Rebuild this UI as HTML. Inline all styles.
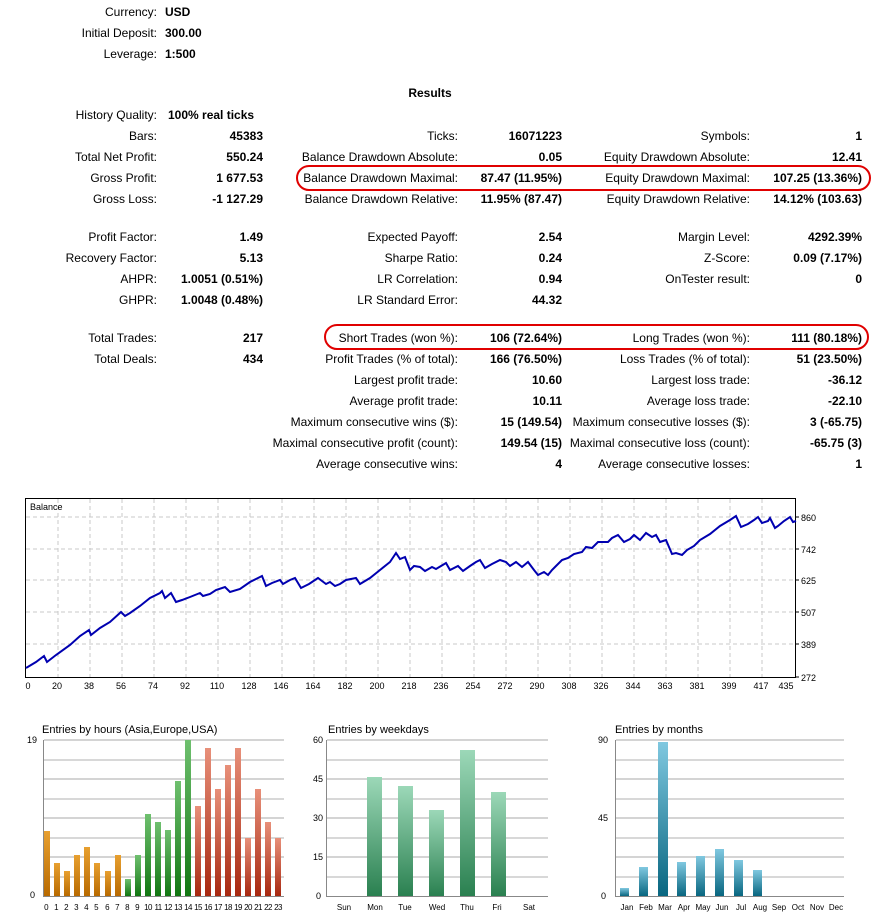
<!DOCTYPE html>
<html><head><meta charset="utf-8"><style>
html,body{margin:0;padding:0;background:#fff;width:889px;height:919px;overflow:hidden}
svg{display:block;font-family:"Liberation Sans",Tahoma,sans-serif}
.l{font-size:12px;fill:#000;text-anchor:end}
.v{font-size:12px;fill:#000;text-anchor:end;font-weight:bold}
.s{font-size:9px;fill:#000}
</style></head><body>
<svg width="889" height="919" viewBox="0 0 889 919">
<g>
<text class="l" x="157" y="16">Currency:</text><text class="v" x="165" y="16" style="text-anchor:start">USD</text>
<text class="l" x="157" y="37">Initial Deposit:</text><text class="v" x="165" y="37" style="text-anchor:start">300.00</text>
<text class="l" x="157" y="58">Leverage:</text><text class="v" x="165" y="58" style="text-anchor:start">1:500</text>
<text class="v" x="430" y="97" style="text-anchor:middle">Results</text>
<text class="l" x="157" y="119">History Quality:</text><text class="v" x="168" y="119" style="text-anchor:start">100% real ticks</text>

<text class="l" x="157" y="140">Bars:</text><text class="v" x="263" y="140">45383</text>
<text class="l" x="458" y="140">Ticks:</text><text class="v" x="562" y="140">16071223</text>
<text class="l" x="750" y="140">Symbols:</text><text class="v" x="862" y="140">1</text>

<text class="l" x="157" y="161">Total Net Profit:</text><text class="v" x="263" y="161">550.24</text>
<text class="l" x="458" y="161">Balance Drawdown Absolute:</text><text class="v" x="562" y="161">0.05</text>
<text class="l" x="750" y="161">Equity Drawdown Absolute:</text><text class="v" x="862" y="161">12.41</text>

<text class="l" x="157" y="182">Gross Profit:</text><text class="v" x="263" y="182">1 677.53</text>
<text class="l" x="458" y="182">Balance Drawdown Maximal:</text><text class="v" x="562" y="182">87.47 (11.95%)</text>
<text class="l" x="750" y="182">Equity Drawdown Maximal:</text><text class="v" x="862" y="182">107.25 (13.36%)</text>

<text class="l" x="157" y="203">Gross Loss:</text><text class="v" x="263" y="203">-1 127.29</text>
<text class="l" x="458" y="203">Balance Drawdown Relative:</text><text class="v" x="562" y="203">11.95% (87.47)</text>
<text class="l" x="750" y="203">Equity Drawdown Relative:</text><text class="v" x="862" y="203">14.12% (103.63)</text>

<text class="l" x="157" y="241">Profit Factor:</text><text class="v" x="263" y="241">1.49</text>
<text class="l" x="458" y="241">Expected Payoff:</text><text class="v" x="562" y="241">2.54</text>
<text class="l" x="750" y="241">Margin Level:</text><text class="v" x="862" y="241">4292.39%</text>

<text class="l" x="157" y="262">Recovery Factor:</text><text class="v" x="263" y="262">5.13</text>
<text class="l" x="458" y="262">Sharpe Ratio:</text><text class="v" x="562" y="262">0.24</text>
<text class="l" x="750" y="262">Z-Score:</text><text class="v" x="862" y="262">0.09 (7.17%)</text>

<text class="l" x="157" y="283">AHPR:</text><text class="v" x="263" y="283">1.0051 (0.51%)</text>
<text class="l" x="458" y="283">LR Correlation:</text><text class="v" x="562" y="283">0.94</text>
<text class="l" x="750" y="283">OnTester result:</text><text class="v" x="862" y="283">0</text>

<text class="l" x="157" y="304">GHPR:</text><text class="v" x="263" y="304">1.0048 (0.48%)</text>
<text class="l" x="458" y="304">LR Standard Error:</text><text class="v" x="562" y="304">44.32</text>

<text class="l" x="157" y="342">Total Trades:</text><text class="v" x="263" y="342">217</text>
<text class="l" x="458" y="342">Short Trades (won %):</text><text class="v" x="562" y="342">106 (72.64%)</text>
<text class="l" x="750" y="342">Long Trades (won %):</text><text class="v" x="862" y="342">111 (80.18%)</text>

<text class="l" x="157" y="363">Total Deals:</text><text class="v" x="263" y="363">434</text>
<text class="l" x="458" y="363">Profit Trades (% of total):</text><text class="v" x="562" y="363">166 (76.50%)</text>
<text class="l" x="750" y="363">Loss Trades (% of total):</text><text class="v" x="862" y="363">51 (23.50%)</text>

<text class="l" x="458" y="384">Largest profit trade:</text><text class="v" x="562" y="384">10.60</text>
<text class="l" x="750" y="384">Largest loss trade:</text><text class="v" x="862" y="384">-36.12</text>
<text class="l" x="458" y="405">Average profit trade:</text><text class="v" x="562" y="405">10.11</text>
<text class="l" x="750" y="405">Average loss trade:</text><text class="v" x="862" y="405">-22.10</text>
<text class="l" x="458" y="426">Maximum consecutive wins ($):</text><text class="v" x="562" y="426">15 (149.54)</text>
<text class="l" x="750" y="426">Maximum consecutive losses ($):</text><text class="v" x="862" y="426">3 (-65.75)</text>
<text class="l" x="458" y="447">Maximal consecutive profit (count):</text><text class="v" x="562" y="447">149.54 (15)</text>
<text class="l" x="750" y="447">Maximal consecutive loss (count):</text><text class="v" x="862" y="447">-65.75 (3)</text>
<text class="l" x="458" y="468">Average consecutive wins:</text><text class="v" x="562" y="468">4</text>
<text class="l" x="750" y="468">Average consecutive losses:</text><text class="v" x="862" y="468">1</text>

<rect x="297" y="166" width="573" height="24" rx="12" fill="none" stroke="#e00000" stroke-width="2"/>
<rect x="325" y="325" width="543" height="24" rx="12" fill="none" stroke="#e00000" stroke-width="2"/>
</g>

<!-- Balance chart -->
<g>
<rect x="25.5" y="498.5" width="770" height="179" fill="#fff" stroke="#000"/>
<g stroke="#c8c8c8" stroke-dasharray="4,3">
<line x1="26" y1="517" x2="795" y2="517"/><line x1="26" y1="549" x2="795" y2="549"/><line x1="26" y1="580" x2="795" y2="580"/><line x1="26" y1="612" x2="795" y2="612"/><line x1="26" y1="644" x2="795" y2="644"/>
<line x1="58" y1="499" x2="58" y2="677"/><line x1="90" y1="499" x2="90" y2="677"/><line x1="122" y1="499" x2="122" y2="677"/><line x1="154" y1="499" x2="154" y2="677"/><line x1="186" y1="499" x2="186" y2="677"/><line x1="218" y1="499" x2="218" y2="677"/><line x1="250" y1="499" x2="250" y2="677"/><line x1="282" y1="499" x2="282" y2="677"/><line x1="314" y1="499" x2="314" y2="677"/><line x1="346" y1="499" x2="346" y2="677"/><line x1="378" y1="499" x2="378" y2="677"/><line x1="410" y1="499" x2="410" y2="677"/><line x1="442" y1="499" x2="442" y2="677"/><line x1="474" y1="499" x2="474" y2="677"/><line x1="506" y1="499" x2="506" y2="677"/><line x1="538" y1="499" x2="538" y2="677"/><line x1="570" y1="499" x2="570" y2="677"/><line x1="602" y1="499" x2="602" y2="677"/><line x1="634" y1="499" x2="634" y2="677"/><line x1="666" y1="499" x2="666" y2="677"/><line x1="698" y1="499" x2="698" y2="677"/><line x1="730" y1="499" x2="730" y2="677"/><line x1="762" y1="499" x2="762" y2="677"/>
</g>
<text x="30" y="510" font-size="9">Balance</text>
<polyline fill="none" stroke="#0000b0" stroke-width="2" points="26,668 36,662 44,656 47,662 56,655 70,645 80,636 89,630 91,635 100,628 110,622 121,612 125,616 130,613 140,606 150,598 160,593 162,591 165,598 171,593 176,602 182,600 190,597 200,593 203,596 210,594 216,590 225,587 230,592 240,589 250,582 258,578 262,576 266,586 272,583 280,580 283,584 290,580 295,578 301,588 309,584 312,582 318,578 326,584 330,582 335,586 340,584 346,580 356,578 360,584 370,578 380,570 390,562 396,553 400,559 405,557 410,570 414,566 420,567 425,571 432,567 436,569 441,566 446,563 450,570 458,566 463,571 470,566 476,562 480,560 485,568 492,564 500,560 506,562 510,566 516,562 522,567 528,562 534,570 538,575 544,572 548,575 552,570 556,566 562,560 568,558 574,554 582,552 586,547 592,548 598,542 608,542 612,538 618,535 624,542 630,539 634,535 640,540 646,533 652,537 656,535 660,542 666,540 672,554 676,553 682,555 687,550 694,546 700,540 710,534 720,526 730,520 736,516 741,527 748,524 754,520 758,517 762,523 768,521 770,518 775,528 778,526 784,521 790,517 793,522 796,521"/>
<g font-size="9" fill="#000">
<text x="801" y="521">860</text><text x="801" y="553">742</text><text x="801" y="584">625</text><text x="801" y="616">507</text><text x="801" y="648">389</text><text x="801" y="681">272</text>
</g>
<g stroke="#000"><line x1="796" y1="517" x2="799" y2="517"/><line x1="796" y1="549" x2="799" y2="549"/><line x1="796" y1="580" x2="799" y2="580"/><line x1="796" y1="612" x2="799" y2="612"/><line x1="796" y1="644" x2="799" y2="644"/><line x1="796" y1="677" x2="799" y2="677"/></g>
<g font-size="9" fill="#000" text-anchor="middle">
<text x="28" y="689">0</text><text x="57" y="689">20</text><text x="89" y="689">38</text><text x="121" y="689">56</text><text x="153" y="689">74</text><text x="185" y="689">92</text><text x="217" y="689">110</text><text x="249" y="689">128</text><text x="281" y="689">146</text><text x="313" y="689">164</text><text x="345" y="689">182</text><text x="377" y="689">200</text><text x="409" y="689">218</text><text x="441" y="689">236</text><text x="473" y="689">254</text><text x="505" y="689">272</text><text x="537" y="689">290</text><text x="569" y="689">308</text><text x="601" y="689">326</text><text x="633" y="689">344</text><text x="665" y="689">363</text><text x="697" y="689">381</text><text x="729" y="689">399</text><text x="761" y="689">417</text><text x="786" y="689">435</text>
</g>
</g>

<defs>
<linearGradient id="go" x1="0" y1="0" x2="0" y2="1"><stop offset="0" stop-color="#e8a030"/><stop offset="1" stop-color="#b86a00"/></linearGradient>
<linearGradient id="gg" x1="0" y1="0" x2="0" y2="1"><stop offset="0" stop-color="#6fc06f"/><stop offset="1" stop-color="#117711"/></linearGradient>
<linearGradient id="gr" x1="0" y1="0" x2="0" y2="1"><stop offset="0" stop-color="#e8907a"/><stop offset="1" stop-color="#a82810"/></linearGradient>
<linearGradient id="gw" x1="0" y1="0" x2="0" y2="1"><stop offset="0" stop-color="#9cd8b8"/><stop offset="1" stop-color="#2a8050"/></linearGradient>
<linearGradient id="gb" x1="0" y1="0" x2="0" y2="1"><stop offset="0" stop-color="#80c8e0"/><stop offset="1" stop-color="#086680"/></linearGradient>
</defs>

<!-- Hours -->
<g>
<text x="42" y="733" font-size="11">Entries by hours (Asia,Europe,USA)</text>
<g stroke="#a8a8a8"><line x1="44" y1="740" x2="284" y2="740"/><line x1="44" y1="779" x2="284" y2="779"/><line x1="44" y1="818" x2="284" y2="818"/><line x1="44" y1="857" x2="284" y2="857"/></g>
<g stroke="#d8d8d8" stroke-width="2"><line x1="44" y1="760" x2="284" y2="760"/><line x1="44" y1="799" x2="284" y2="799"/><line x1="44" y1="838" x2="284" y2="838"/><line x1="44" y1="877" x2="284" y2="877"/></g>
<text class="s" x="27" y="743">19</text><text class="s" x="30" y="898">0</text>
<line x1="43.5" y1="740" x2="43.5" y2="897" stroke="#888"/><line x1="43" y1="896.5" x2="284" y2="896.5" stroke="#888"/>
<g>
<rect x="44" y="831" width="6" height="65" fill="url(#go)"/><rect x="54" y="863" width="6" height="33" fill="url(#go)"/><rect x="64" y="871" width="6" height="25" fill="url(#go)"/><rect x="74" y="855" width="6" height="41" fill="url(#go)"/><rect x="84" y="847" width="6" height="49" fill="url(#go)"/><rect x="94" y="863" width="6" height="33" fill="url(#go)"/><rect x="105" y="871" width="6" height="25" fill="url(#go)"/><rect x="115" y="855" width="6" height="41" fill="url(#go)"/>
<rect x="125" y="879" width="6" height="17" fill="url(#gg)"/><rect x="135" y="855" width="6" height="41" fill="url(#gg)"/><rect x="145" y="814" width="6" height="82" fill="url(#gg)"/><rect x="155" y="822" width="6" height="74" fill="url(#gg)"/><rect x="165" y="830" width="6" height="66" fill="url(#gg)"/><rect x="175" y="781" width="6" height="115" fill="url(#gg)"/><rect x="185" y="740" width="6" height="156" fill="url(#gg)"/>
<rect x="195" y="806" width="6" height="90" fill="url(#gr)"/><rect x="205" y="748" width="6" height="148" fill="url(#gr)"/><rect x="215" y="789" width="6" height="107" fill="url(#gr)"/><rect x="225" y="765" width="6" height="131" fill="url(#gr)"/><rect x="235" y="748" width="6" height="148" fill="url(#gr)"/><rect x="245" y="838" width="6" height="58" fill="url(#gr)"/><rect x="255" y="789" width="6" height="107" fill="url(#gr)"/><rect x="265" y="822" width="6" height="74" fill="url(#gr)"/><rect x="275" y="838" width="6" height="58" fill="url(#gr)"/>
</g>
<g font-size="8" text-anchor="middle" letter-spacing="-0.6">
<text x="46" y="910">0</text><text x="56" y="910">1</text><text x="66" y="910">2</text><text x="76" y="910">3</text><text x="86" y="910">4</text><text x="96" y="910">5</text><text x="107" y="910">6</text><text x="117" y="910">7</text><text x="127" y="910">8</text><text x="137" y="910">9</text><text x="148" y="910">10</text><text x="158" y="910">11</text><text x="168" y="910">12</text><text x="178" y="910">13</text><text x="188" y="910">14</text><text x="198" y="910">15</text><text x="208" y="910">16</text><text x="218" y="910">17</text><text x="228" y="910">18</text><text x="238" y="910">19</text><text x="248" y="910">20</text><text x="258" y="910">21</text><text x="268" y="910">22</text><text x="278" y="910">23</text>
</g>
</g>

<!-- Weekdays -->
<g>
<text x="328" y="733" font-size="11">Entries by weekdays</text>
<g stroke="#a8a8a8"><line x1="327" y1="740" x2="548" y2="740"/><line x1="327" y1="779" x2="548" y2="779"/><line x1="327" y1="818" x2="548" y2="818"/><line x1="327" y1="857" x2="548" y2="857"/></g>
<g stroke="#d8d8d8" stroke-width="2"><line x1="327" y1="760" x2="548" y2="760"/><line x1="327" y1="799" x2="548" y2="799"/><line x1="327" y1="838" x2="548" y2="838"/><line x1="327" y1="877" x2="548" y2="877"/></g>
<g class="s" font-size="9"><text x="313" y="743">60</text><text x="313" y="782">45</text><text x="313" y="821">30</text><text x="313" y="860">15</text><text x="316" y="899">0</text></g>
<line x1="326.5" y1="740" x2="326.5" y2="897" stroke="#888"/><line x1="326" y1="896.5" x2="548" y2="896.5" stroke="#888"/>
<rect x="367" y="777" width="15" height="119" fill="url(#gw)"/><rect x="398" y="786" width="15" height="110" fill="url(#gw)"/><rect x="429" y="810" width="15" height="86" fill="url(#gw)"/><rect x="460" y="750" width="15" height="146" fill="url(#gw)"/><rect x="491" y="792" width="15" height="104" fill="url(#gw)"/>
<g font-size="8" text-anchor="middle"><text x="344" y="910">Sun</text><text x="375" y="910">Mon</text><text x="405" y="910">Tue</text><text x="437" y="910">Wed</text><text x="467" y="910">Thu</text><text x="497" y="910">Fri</text><text x="529" y="910">Sat</text></g>
</g>

<!-- Months -->
<g>
<text x="615" y="733" font-size="11">Entries by months</text>
<g stroke="#a8a8a8"><line x1="616" y1="740" x2="844" y2="740"/><line x1="616" y1="779" x2="844" y2="779"/><line x1="616" y1="818" x2="844" y2="818"/><line x1="616" y1="857" x2="844" y2="857"/></g>
<g stroke="#d8d8d8" stroke-width="2"><line x1="616" y1="760" x2="844" y2="760"/><line x1="616" y1="799" x2="844" y2="799"/><line x1="616" y1="838" x2="844" y2="838"/><line x1="616" y1="877" x2="844" y2="877"/></g>
<g class="s" font-size="9"><text x="598" y="743">90</text><text x="598" y="821">45</text><text x="601" y="899">0</text></g>
<line x1="615.5" y1="740" x2="615.5" y2="897" stroke="#888"/><line x1="615" y1="896.5" x2="844" y2="896.5" stroke="#888"/>
<rect x="620" y="888" width="9" height="8" fill="url(#gb)"/><rect x="639" y="867" width="9" height="29" fill="url(#gb)"/><rect x="658" y="742" width="10" height="154" fill="url(#gb)"/><rect x="677" y="862" width="9" height="34" fill="url(#gb)"/><rect x="696" y="856" width="9" height="40" fill="url(#gb)"/><rect x="715" y="849" width="9" height="47" fill="url(#gb)"/><rect x="734" y="860" width="9" height="36" fill="url(#gb)"/><rect x="753" y="870" width="9" height="26" fill="url(#gb)"/>
<g font-size="8" text-anchor="middle"><text x="627" y="910">Jan</text><text x="646" y="910">Feb</text><text x="665" y="910">Mar</text><text x="684" y="910">Apr</text><text x="703" y="910">May</text><text x="722" y="910">Jun</text><text x="741" y="910">Jul</text><text x="760" y="910">Aug</text><text x="779" y="910">Sep</text><text x="798" y="910">Oct</text><text x="817" y="910">Nov</text><text x="836" y="910">Dec</text></g>
</g>
</svg>
</body></html>
